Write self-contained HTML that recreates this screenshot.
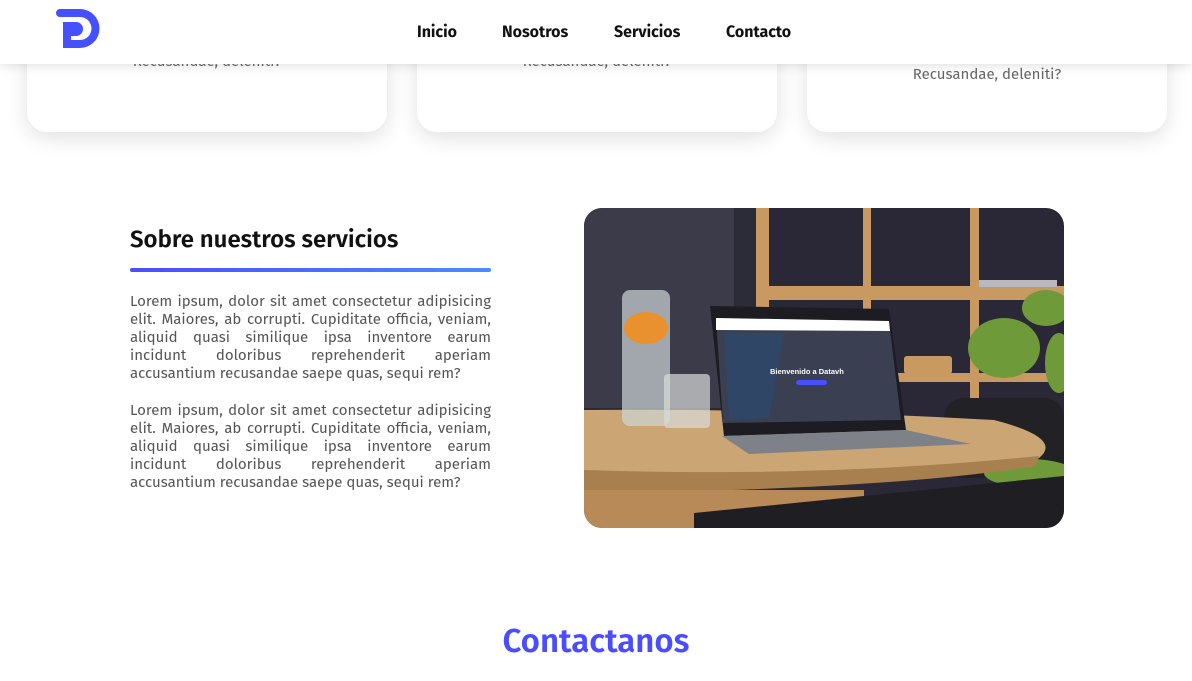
<!DOCTYPE html>
<html><head><meta charset="utf-8"><style>
*{margin:0;padding:0;box-sizing:border-box}
body{width:1192px;height:681px;overflow:hidden;background:#fff;font-family:"Fira Sans","Liberation Sans",sans-serif;position:relative}
.card{position:absolute;top:-40px;width:360px;height:172px;background:#fff;border-radius:20px;box-shadow:0 6px 22px rgba(0,0,0,.12);text-align:center;color:#666;font-size:15px}
header{position:absolute;top:0;left:0;width:1192px;height:64px;background:#fff;box-shadow:0 2px 10px rgba(0,0,0,.12);z-index:5}
nav a{position:absolute;top:23px;font-size:16px;font-weight:bold;color:#111;text-decoration:none}
h2{position:absolute;left:130px;top:226px;font-size:24px;font-weight:600;color:#111}
.bar{position:absolute;left:130px;top:268px;width:361px;height:4px;border-radius:2px;background:linear-gradient(90deg,#4a4dff,#4a8bff)}
p{position:absolute;left:130px;width:361px;font-size:15px;line-height:18px;color:#555;text-align:justify}
.img{position:absolute;left:584px;top:208px;width:480px;height:320px;border-radius:18px;overflow:hidden}
h3{position:absolute;top:621px;width:100%;text-align:center;font-size:33px;font-weight:600;color:#4a4dff}
</style></head><body>
<div class="card" style="left:27px"><div style="position:absolute;top:92px;width:100%">Recusandae, deleniti?</div></div>
<div class="card" style="left:417px"><div style="position:absolute;top:92px;width:100%">Recusandae, deleniti?</div></div>
<div class="card" style="left:807px"><div style="position:absolute;top:105px;width:100%">Recusandae, deleniti?</div></div>
<header>
<svg style="position:absolute;left:56px;top:9px" width="44" height="40" viewBox="0 0 44 40"><path d="M4 0H24A19.5 19.5 0 0 1 24 39H7V31H24A11.5 11.5 0 0 0 24 8H4A4 4 0 0 1 4 0Z" fill="#4650ff"/><path d="M7 13H20A7 7 0 0 1 20 27H15V31H7Z" fill="#4650ff"/></svg>
<nav><a style="left:417px">Inicio</a><a style="left:502px">Nosotros</a><a style="left:614px">Servicios</a><a style="left:726px">Contacto</a></nav>
</header>
<h2>Sobre nuestros servicios</h2>
<div class="bar"></div>
<p style="top:292px">Lorem ipsum, dolor sit amet consectetur adipisicing elit. Maiores, ab corrupti. Cupiditate officia, veniam, aliquid quasi similique ipsa inventore earum incidunt doloribus reprehenderit aperiam accusantium recusandae saepe quas, sequi rem?</p>
<p style="top:401px">Lorem ipsum, dolor sit amet consectetur adipisicing elit. Maiores, ab corrupti. Cupiditate officia, veniam, aliquid quasi similique ipsa inventore earum incidunt doloribus reprehenderit aperiam accusantium recusandae saepe quas, sequi rem?</p>
<div class="img">
<svg width="480" height="320" viewBox="0 0 480 320">
<rect width="480" height="320" fill="#2a2836"/>
<rect x="0" y="0" width="150" height="200" fill="#3b3b4a"/>
<rect x="150" y="0" width="22" height="200" fill="#2c2c38"/>
<g fill="#c89a62"><rect x="172" y="0" width="13" height="200"/><rect x="279" y="0" width="8" height="200"/><rect x="386" y="0" width="9" height="200"/><rect x="172" y="78" width="308" height="14"/><rect x="172" y="165" width="308" height="9"/><rect x="320" y="148" width="48" height="18" rx="3"/></g>
<rect x="395" y="72" width="78" height="7" fill="#b8b8be"/>
<rect x="360" y="190" width="120" height="80" rx="20" fill="#222226"/>
<g fill="#6e9a3a"><ellipse cx="420" cy="140" rx="36" ry="30"/><ellipse cx="462" cy="100" rx="24" ry="18"/><ellipse cx="475" cy="155" rx="14" ry="30"/><ellipse cx="445" cy="265" rx="45" ry="14"/></g>
<path d="M0 202Q200 200 410 212Q480 230 455 250Q400 270 240 275L0 280Z" fill="#cba573"/>
<path d="M0 262Q240 270 455 248L452 258Q300 282 0 285Z" fill="#a88050"/>
<rect x="0" y="282" width="280" height="38" fill="#b88a58"/>
<path d="M110 320V305L480 268V320Z" fill="#1f1f23"/>
<rect x="38" y="82" width="48" height="136" rx="8" fill="#cdd5d5" opacity=".7"/>
<ellipse cx="62" cy="120" rx="22" ry="16" fill="#e8912e"/>
<rect x="80" y="166" width="46" height="54" rx="4" fill="#d8dcd8" opacity=".7"/>
<path d="M126 98L305 101L322 222L140 228Z" fill="#1c1c22"/>
<path d="M132 110L305 113L317 212L139 215Z" fill="#3b3f52"/>
<path d="M132 110L305 113L306 123L132 122Z" fill="#fff"/>
<path d="M140 125L200 125L185 210L145 212Z" fill="#2c4a70" opacity=".7"/>
<text x="186" y="166" font-size="7.5" fill="#fff" font-family="Liberation Sans" font-weight="bold">Bienvenido a Datavh</text>
<rect x="212" y="172" width="31" height="5" rx="2.5" fill="#4650ff"/>
<path d="M138 228L322 222L387 236L165 246Z" fill="#7e8288"/>
</svg>
</div>
<h3>Contactanos</h3>
</body></html>
